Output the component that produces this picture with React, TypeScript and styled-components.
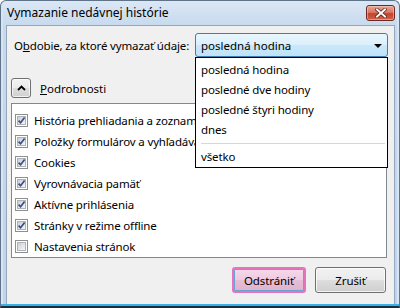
import React from "react";
import styled, { createGlobalStyle } from "styled-components";

const Global = createGlobalStyle`
  html, body { margin: 0; padding: 0; background: #ffffff; }
  body {
    font-family: "Noto Sans", "Open Sans", sans-serif;
    font-size: 11.5px;
    color: #000;
  }
  * { box-sizing: border-box; }
`;

const Window = styled.div`
  width: 400px;
  height: 308px;
  display: flex;
  flex-direction: column;
  background: linear-gradient(#dbe7f5, #c6d9ee 26px, #c0d4eb);
  border: 1px solid #5f7389;
  border-bottom: 2px solid #1d2d3f;
  border-radius: 6px 6px 0 0;
  box-shadow: inset 0 -2px 0 #38b1e4, inset 2px 0 0 #d6e4f3, inset -2px 0 0 #d6e4f3;
`;

const TitleBar = styled.div`
  height: 24px;
  flex: none;
  display: flex;
  align-items: flex-start;
  justify-content: space-between;
  padding: 0 4px 0 6px;
`;

const Title = styled.div`
  line-height: 24px;
  font-size: 12px;
  color: #000;
`;

const CloseButton = styled.div`
  margin-top: 4px;
  width: 29px;
  height: 16px;
  border: 1px solid #6d2a22;
  border-radius: 3px;
  background: linear-gradient(#eaa594 0%, #d97864 45%, #c4422a 55%, #d2624b 100%);
  box-shadow: inset 0 0 0 1px rgba(255, 220, 210, 0.45);
  display: flex;
  align-items: center;
  justify-content: center;
`;

const Client = styled.div`
  flex: 1;
  margin: 0 4px 2px 5px;
  background: #f0f0f0;
  border: 1px solid #97a7bb;
  border-bottom: none;
  display: flex;
  flex-direction: column;
  padding: 7px 6px 0 4px;
`;

const PeriodRow = styled.div`
  height: 24px;
  display: flex;
  align-items: center;
  justify-content: space-between;
  position: relative;
  z-index: 5;
`;

const Label = styled.div`
  margin-left: 3px;
  letter-spacing: -0.15px;
`;

const Mnemonic = styled.span`
  text-decoration: underline;
  text-underline-offset: 1px;
`;

const ComboWrap = styled.div`
  position: relative;
  width: 193px;
  height: 24px;
`;

const Combo = styled.div`
  height: 24px;
  border: 1px solid #3c7fb1;
  border-radius: 3px;
  background: linear-gradient(#eaf6fd 0%, #dbf0fc 48%, #c9e8fa 52%, #bfe3f8 100%);
  display: flex;
  align-items: center;
  justify-content: space-between;
  padding: 0 5px 0 5px;
`;

const Arrow = styled.div`
  width: 0;
  height: 0;
  border-left: 4px solid transparent;
  border-right: 4px solid transparent;
  border-top: 4px solid #000;
  margin-top: 1px;
`;

const DropList = styled.div`
  position: absolute;
  top: 24px;
  left: 0;
  width: 193px;
  height: 111px;
  background: #fff;
  border: 1px solid #000;
  padding-top: 2px;
  display: flex;
  flex-direction: column;
`;

const DropItem = styled.div`
  height: 20px;
  line-height: 20px;
  padding-left: 5px;
  letter-spacing: -0.15px;
`;

const Separator = styled.div`
  height: 1px;
  margin: 3px 2px 3px 5px;
  background: #d7d7d7;
  box-shadow: 0 1px 0 #fff;
`;

const DetailsRow = styled.div`
  margin-top: 21px;
  height: 20px;
  display: flex;
  align-items: center;
  gap: 9px;
`;

const ExpandButton = styled.div`
  width: 20px;
  height: 20px;
  border: 1px solid #707070;
  border-radius: 3px;
  background: linear-gradient(#f2f2f2 0%, #ebebeb 48%, #dddddd 52%, #cfcfcf 100%);
  box-shadow: inset 0 0 0 1px rgba(255, 255, 255, 0.7);
  display: flex;
  align-items: center;
  justify-content: center;
`;

const Panel = styled.div`
  margin-top: 5px;
  margin-right: 1px;
  height: 155px;
  background: #fff;
  border: 1px solid #828790;
  padding-top: 6px;
  overflow: hidden;
`;

const CheckRow = styled.div`
  height: 21px;
  display: flex;
  align-items: center;
  padding-left: 3px;
  gap: 6px;
  white-space: nowrap;
  letter-spacing: -0.15px;
`;

const Box = styled.div`
  width: 13px;
  height: 13px;
  flex: none;
  border: 1px solid #8f8f8f;
  background: #fff;
  padding: 1px;
`;

const BoxInner = styled.div`
  width: 9px;
  height: 9px;
  background: linear-gradient(135deg, #cbcfd5 0%, #e4e6e9 60%, #f7f7f7 100%);
  border: 1px solid #aeb3b9;
  position: relative;
`;

const ButtonRow = styled.div`
  margin-top: 9px;
  margin-right: 2px;
  display: flex;
  justify-content: flex-end;
  gap: 9px;
`;

const DialogButton = styled.div<{ $primary?: boolean; $w: number }>`
  width: ${(p) => p.$w}px;
  height: 26px;
  border-radius: 3px;
  display: flex;
  align-items: center;
  justify-content: center;
  letter-spacing: -0.1px;
  ${(p) =>
    p.$primary
      ? `
    border: 2px solid #e873bd;
    background: linear-gradient(#f5d9ea 0%, #eecbe0 48%, #e6bdd6 52%, #e0b2cd 100%);
    box-shadow: inset 0 0 0 1px #6aa3cf;
  `
      : `
    border: 1px solid #707070;
    background: linear-gradient(#f2f2f2 0%, #ebebeb 48%, #dddddd 52%, #cfcfcf 100%);
    box-shadow: inset 0 0 0 1px rgba(255,255,255,0.75);
  `}
`;

const CheckMark = () => (
  <svg width="9" height="9" viewBox="0 0 9 9" style={{ position: "absolute", left: -1, top: -1 }}>
    <path d="M1.6 4.6 L3.6 6.8 L7.6 1.6" fill="none" stroke="#3a4f86" strokeWidth="1.7" />
  </svg>
);

const items: { label: string; checked: boolean }[] = [
  { label: "História prehliadania a zoznam prevzatých súborov", checked: true },
  { label: "Položky formulárov a vyhľadávania", checked: true },
  { label: "Cookies", checked: true },
  { label: "Vyrovnávacia pamäť", checked: true },
  { label: "Aktívne prihlásenia", checked: true },
  { label: "Stránky v režime offline", checked: true },
  { label: "Nastavenia stránok", checked: false },
];

export default function App() {
  return (
    <>
      <Global />
      <Window>
        <TitleBar>
          <Title>Vymazanie nedávnej histórie</Title>
          <CloseButton>
            <svg width="12" height="10" viewBox="0 0 12 10">
              <path d="M2 1.5 L10 8.5 M10 1.5 L2 8.5" stroke="#4a1a14" strokeWidth="3.4" strokeLinecap="square" />
              <path d="M2 1.5 L10 8.5 M10 1.5 L2 8.5" stroke="#ffffff" strokeWidth="2" strokeLinecap="square" />
            </svg>
          </CloseButton>
        </TitleBar>
        <Client>
          <PeriodRow>
            <Label>
              O<Mnemonic>b</Mnemonic>dobie, za ktoré vymazať údaje:
            </Label>
            <ComboWrap>
              <Combo>
                <span>posledná hodina</span>
                <Arrow />
              </Combo>
              <DropList>
                <DropItem>posledná hodina</DropItem>
                <DropItem>posledné dve hodiny</DropItem>
                <DropItem>posledné štyri hodiny</DropItem>
                <DropItem>dnes</DropItem>
                <Separator />
                <DropItem>všetko</DropItem>
              </DropList>
            </ComboWrap>
          </PeriodRow>
          <DetailsRow>
            <ExpandButton>
              <svg width="9" height="6" viewBox="0 0 9 6">
                <path d="M1 5 L4.5 1.5 L8 5" fill="none" stroke="#000" strokeWidth="1.8" />
              </svg>
            </ExpandButton>
            <span>
              <Mnemonic>P</Mnemonic>odrobnosti
            </span>
          </DetailsRow>
          <Panel>
            {items.map((it) => (
              <CheckRow key={it.label}>
                <Box>
                  <BoxInner>{it.checked && <CheckMark />}</BoxInner>
                </Box>
                <span>{it.label}</span>
              </CheckRow>
            ))}
          </Panel>
          <ButtonRow>
            <DialogButton $primary $w={74}>Odstrániť</DialogButton>
            <DialogButton $w={71}>Zrušiť</DialogButton>
          </ButtonRow>
        </Client>
      </Window>
    </>
  );
}
